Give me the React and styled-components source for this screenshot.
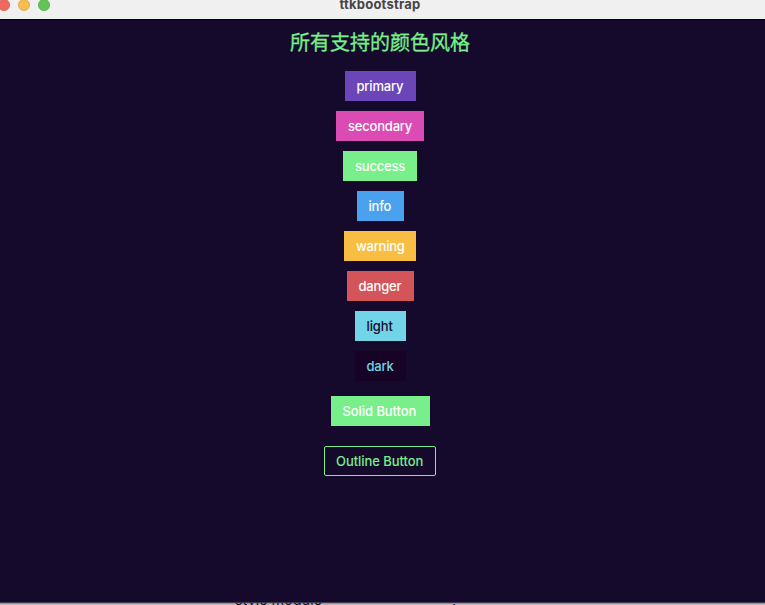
import React from "react";
import styled, { createGlobalStyle } from "styled-components";

const GlobalStyle = createGlobalStyle`
  * { box-sizing: border-box; }
  body { margin: 0; overflow: hidden; background: #b4b1b4; }
`;

const Screen = styled.div`
  width: 765px;
  height: 605px;
  overflow: hidden;
  display: flex;
  flex-direction: column;
  font-family: Inter, "Noto Sans CJK SC", sans-serif;
`;

const TitleBar = styled.header`
  flex: 0 0 19px;
  display: flex;
  position: relative;
  background: #f1f0f1;
`;

const TrafficLights = styled.svg`
  display: block;
  width: 56px;
  height: 19px;
`;

const WindowTitle = styled.div`
  position: absolute;
  left: 0;
  top: -5px;
  width: 760px;
  text-align: center;
  font-size: 13px;
  line-height: 18px;
  font-weight: 700;
  letter-spacing: 0.22px;
  color: #464546;
`;

const Content = styled.main`
  flex: 0 0 584px;
  border-top: 1px solid #000;
  border-bottom: 1px solid #3f3650;
  background: #160a2c;
  padding-right: 5px;
  display: flex;
  flex-direction: column;
  align-items: center;
`;

const Heading = styled.h1`
  margin: 7px 0 14px;
  height: 30px;
  font-family: "Noto Sans CJK SC", sans-serif;
  font-size: 20px;
  font-weight: 400;
  line-height: 30px;
  color: #78ef8b;
  -webkit-text-stroke: 0.3px #78ef8b;
`;

const ButtonList = styled.div`
  display: flex;
  flex-direction: column;
  align-items: center;
  gap: 10px;
`;

const Button = styled.button`
  width: ${(p) => p.$width}px;
  height: 30px;
  padding: 0 0 0 ${(p) => (p.$outline ? 11 : 12)}px;
  border: ${(p) => (p.$outline ? "1px solid #78ef8b" : "0")};
  border-radius: ${(p) => (p.$outline ? 2 : 0)}px;
  background: ${(p) => p.$bg};
  color: ${(p) => p.$fg || "#ffffff"};
  font-family: Inter, sans-serif;
  font-size: 13px;
  font-weight: 500;
  letter-spacing: ${(p) => p.$spacing || 0}px;
  line-height: 30px;
  white-space: nowrap;
  display: flex;
  align-items: center;
  justify-content: flex-start;
`;

const Actions = styled.div`
  margin-top: 15px;
  display: flex;
  flex-direction: column;
  align-items: center;
  gap: 20px;
`;

const Behind = styled.footer`
  flex: 0 0 2px;
  position: relative;
  overflow: hidden;
  background: linear-gradient(#989598 0 1px, #b9b7b9 1px);
`;

const BehindText = styled.span`
  position: absolute;
  left: ${(p) => p.$left}px;
  top: -11px;
  font-size: 14px;
  line-height: 16px;
  letter-spacing: 0.2px;
  color: #161316;
  white-space: nowrap;
`;

const COLORS = [
  { name: "primary", width: 71, bg: "#6b46b9", spacing: -0.2 },
  { name: "secondary", width: 88, bg: "#da4bb4", spacing: -0.2 },
  { name: "success", width: 74, bg: "#78ef8b", spacing: -0.2 },
  { name: "info", width: 47, bg: "#4aa1ee", spacing: -0.2 },
  { name: "warning", width: 72, bg: "#f7be43", spacing: -0.25 },
  { name: "danger", width: 67, bg: "#d35559", spacing: -0.2 },
  { name: "light", width: 51, bg: "#72d5e7", fg: "#170a2d", spacing: -0.1 },
  { name: "dark", width: 51, bg: "#170326", fg: "#72d5e7", spacing: -0.2 },
];

export default function App() {
  return (
    <Screen>
      <GlobalStyle />
      <TitleBar>
        <TrafficLights viewBox="0 0 56 19">
          <circle cx="4" cy="5" r="5.6" fill="#ed6a5f" stroke="#d3564c" strokeWidth="0.7" />
          <circle cx="24" cy="5" r="5.6" fill="#f5bd4f" stroke="#d8a040" strokeWidth="0.7" />
          <circle cx="44" cy="5" r="5.6" fill="#61c454" stroke="#4ba83e" strokeWidth="0.7" />
        </TrafficLights>
        <WindowTitle>ttkbootstrap</WindowTitle>
      </TitleBar>
      <Content>
        <Heading>所有支持的颜色风格</Heading>
        <ButtonList>
          {COLORS.map((c) => (
            <Button key={c.name} $width={c.width} $bg={c.bg} $fg={c.fg} $spacing={c.spacing}>
              {c.name}
            </Button>
          ))}
        </ButtonList>
        <Actions>
          <Button $width={99} $bg="#78ef8b" $spacing={-0.07}>Solid Button</Button>
          <Button $width={112} $bg="transparent" $fg="#78ef8b" $spacing={-0.05} $outline>
            Outline Button
          </Button>
        </Actions>
      </Content>
      <Behind>
        <BehindText $left={235}>style module</BehindText>
        <BehindText $left={452}>,</BehindText>
      </Behind>
    </Screen>
  );
}
